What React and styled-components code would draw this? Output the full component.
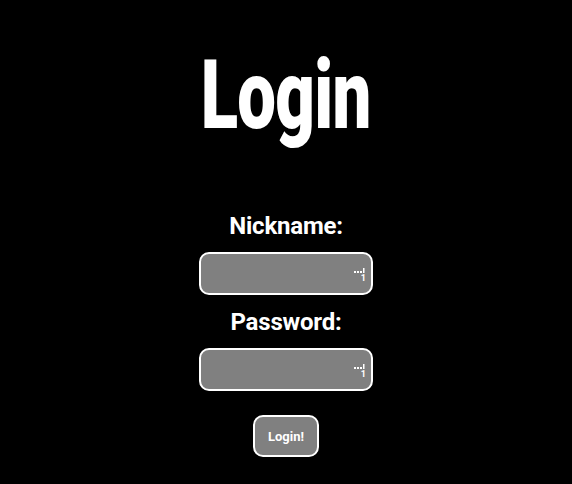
import React from 'react';
import styled, { createGlobalStyle } from 'styled-components';

const GlobalStyle = createGlobalStyle`
  html, body {
    margin: 0;
    padding: 0;
    background: #000;
  }
  body {
    font-family: Roboto, "Liberation Sans", sans-serif;
    color: #fff;
  }
`;

const Page = styled.div`
  min-height: 484px;
  display: flex;
  flex-direction: column;
  align-items: center;
  padding-top: 39px;
  box-sizing: border-box;
`;

const Title = styled.h1`
  margin: 0 0 61px;
  font-family: Roboto, sans-serif;
  font-weight: 900;
  font-size: 97px;
  line-height: 112px;
  letter-spacing: -1px;
  transform: scaleX(0.71);
  color: #fff;
`;

const Form = styled.form`
  display: flex;
  flex-direction: column;
  align-items: center;
`;

const Label = styled.label`
  font-size: 24px;
  font-weight: 700;
  line-height: 28px;
  letter-spacing: -0.2px;
  margin-bottom: 12px;
`;

const Field = styled.div`
  position: relative;
  width: 174px;
  height: 43px;
  margin-bottom: ${props => props.last ? '24px' : '13px'};
`;

const Input = styled.input`
  width: 100%;
  height: 100%;
  box-sizing: border-box;
  background: #808080;
  border: 2px solid #fff;
  border-radius: 10px;
  color: #fff;
  font-family: Roboto, sans-serif;
  font-size: 14px;
  padding: 0 10px;
  outline: none;
`;

const Grip = styled.div`
  position: absolute;
  right: 6px;
  top: 16px;
  width: 14px;
  height: 14px;
  pointer-events: none;
`;

const GripNum = styled.span`
  position: absolute;
  right: 1px;
  top: 6px;
  font-size: 9px;
  font-weight: 700;
  line-height: 9px;
  color: #fff;
`;

const Button = styled.button`
  width: 66px;
  height: 42px;
  box-sizing: border-box;
  background: #808080;
  border: 2px solid #fff;
  border-radius: 10px;
  color: #fff;
  font-family: Roboto, sans-serif;
  font-weight: 700;
  font-size: 13px;
  cursor: pointer;
  padding: 0;
`;

const Handle = () => (
  <Grip>
    <svg width="14" height="14" viewBox="0 0 14 14" style={{ position: 'absolute', left: 0, top: 0 }}>
      <rect x="1" y="3" width="2" height="2" fill="#fff" />
      <rect x="4" y="3" width="2" height="2" fill="#fff" />
      <rect x="7" y="3" width="2" height="2" fill="#fff" />
      <rect x="10" y="0" width="1.5" height="5" fill="#fff" />
    </svg>
    <GripNum>1</GripNum>
  </Grip>
);

const App = () => (
  <>
    <GlobalStyle />
    <Page>
      <Title>Login</Title>
      <Form onSubmit={e => e.preventDefault()}>
        <Label htmlFor="nick">Nickname:</Label>
        <Field>
          <Input id="nick" type="text" />
          <Handle />
        </Field>
        <Label htmlFor="pass">Password:</Label>
        <Field last>
          <Input id="pass" type="password" />
          <Handle />
        </Field>
        <Button type="submit">Login!</Button>
      </Form>
    </Page>
  </>
);

export default App;
